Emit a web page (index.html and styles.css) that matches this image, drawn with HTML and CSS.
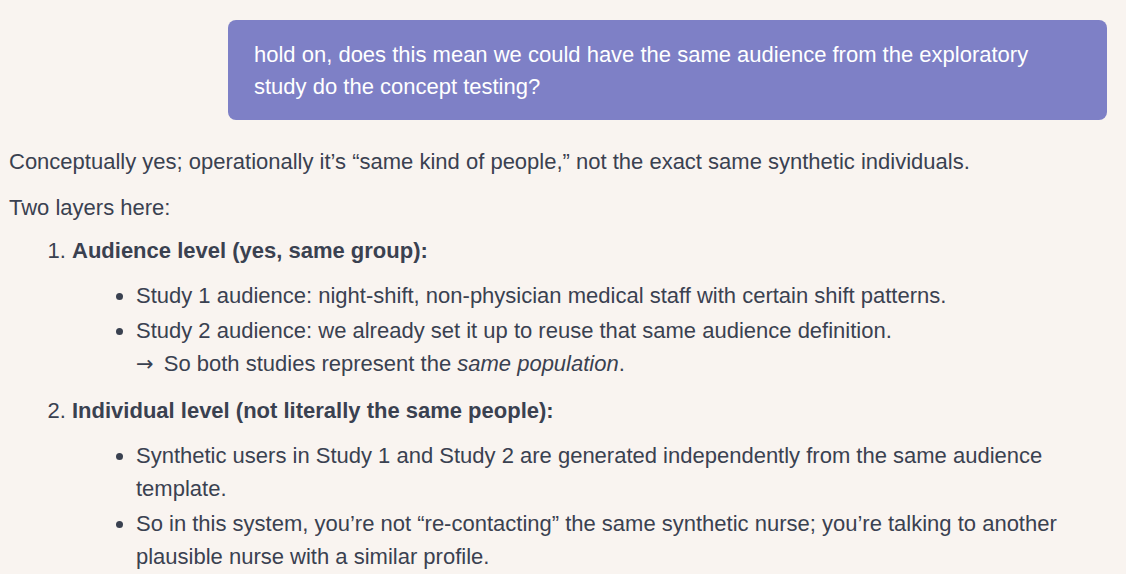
FILE: index.html
```html
<!DOCTYPE html>
<html lang="en">
<head>
<meta charset="utf-8">
<link rel="stylesheet" href="styles.css">
</head>
<body>
<div class="chat">
  <div class="user-row">
    <div class="bubble">hold on, does this mean we could have the same audience from the exploratory study do the concept testing?</div>
  </div>
  <div class="answer">
    <p>Conceptually yes; operationally it’s “same kind of people,” not the exact same synthetic individuals.</p>
    <p class="lead">Two layers here:</p>
    <ol class="layers">
      <li>
        <p><strong>Audience level (yes, same group):</strong></p>
        <ul class="points">
          <li>Study 1 audience: night-shift, non-physician medical staff with certain shift patterns.</li>
          <li>Study 2 audience: we already set it up to reuse that same audience definition.<br><span class="arrow">→</span> So both studies represent the <em>same population</em>.</li>
        </ul>
      </li>
      <li>
        <p><strong>Individual level (not literally the same people):</strong></p>
        <ul class="points">
          <li>Synthetic users in Study 1 and Study 2 are generated independently from the same audience template.</li>
          <li>So in this system, you’re not “re-contacting” the same synthetic nurse; you’re talking to another plausible nurse with a similar profile.</li>
        </ul>
      </li>
    </ol>
  </div>
</div>
</body>
</html>
```
FILE: styles.css
```css
html, body {
  margin: 0;
  padding: 0;
  background: #f9f4f0;
  overflow: hidden;
}
body {
  font-family: "Liberation Sans", Arial, sans-serif;
  font-size: 22px;
  color: #3a4150;
}
.chat {
  padding: 20px 19px 0 8px;
}
.user-row {
  display: flex;
  justify-content: flex-end;
}
.bubble {
  width: 827px;
  background: #7e80c6;
  color: #ffffff;
  border-radius: 8px;
  padding: 19px 26px 17px 26px;
  font-size: 22px;
  line-height: 32px;
}
.answer {
  padding-top: 12px;
  padding-left: 1px;
  line-height: 33px;
}
.answer p {
  margin: 13px 0;
}
.answer p.lead {
  margin-bottom: 10px;
}
.layers {
  margin: 0;
  padding-left: 63px;
}
.layers > li > p {
  margin: 0;
}
.layers > li {
  margin-bottom: 13px;
}
.points {
  list-style: disc;
  margin: 12px 0 0 0;
  padding-left: 64px;
}
.points li {
  margin-bottom: 2px;
}
.arrow {
  font-family: "DejaVu Sans", sans-serif;
  font-size: 21px;
  vertical-align: 0;
  margin-right: 4px;
}
strong { font-weight: 700; }
```
